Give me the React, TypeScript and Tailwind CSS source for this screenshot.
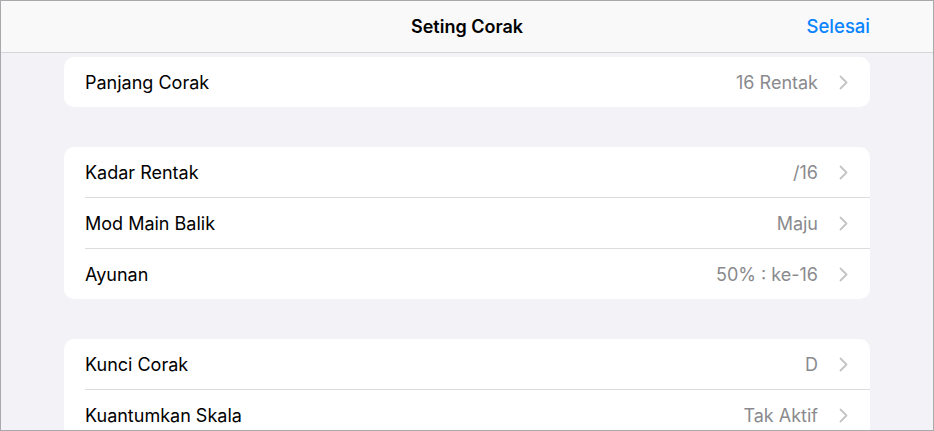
type Row = { label: string; value: string }

const groups: Row[][] = [
  [{ label: 'Panjang Corak', value: '16 Rentak' }],
  [
    { label: 'Kadar Rentak', value: '/16' },
    { label: 'Mod Main Balik', value: 'Maju' },
    { label: 'Ayunan', value: '50% : ke-16' },
  ],
  [
    { label: 'Kunci Corak', value: 'D' },
    { label: 'Kuantumkan Skala', value: 'Tak Aktif' },
  ],
]

function Chevron() {
  return (
    <svg viewBox="0 0 9 15" className="ml-[21px] h-[15px] w-[9px]" fill="none">
      <path d="M1.5 1.5 L7.5 7.5 L1.5 13.5" stroke="#c4c4c7" strokeWidth="1.8" strokeLinecap="round" strokeLinejoin="round" />
    </svg>
  )
}

function SettingsGroup({ rows }: { rows: Row[] }) {
  return (
    <div className="overflow-hidden rounded-[10px] bg-white">
      {rows.map((row, i) => (
        <div key={row.label} className="flex">
          <div
            className={
              i > 0
                ? 'ml-[21px] flex h-[51px] flex-1 items-center border-t border-[#dcdce0] pr-[22px] pt-px'
                : 'ml-[21px] flex h-[50px] flex-1 items-center pr-[22px]'
            }
          >
            <span className="flex-1 text-[18px] text-black">{row.label}</span>
            <span className="text-[18px] text-[#8a8a8e]">{row.value}</span>
            <Chevron />
          </div>
        </div>
      ))}
    </div>
  )
}

export default function App() {
  return (
    <div
      className="h-[431px] w-[934px] overflow-hidden border border-[#a9a9ad] bg-[#f2f2f7]"
      style={{ fontFamily: 'Inter, "Noto Sans", sans-serif' }}
    >
      <header className="flex h-[52px] items-center border-b border-[#d6d6da] bg-[#f9f9f9] px-[63px]">
        <div className="flex-1" />
        <h1 className="text-[18px] font-semibold text-black">Seting Corak</h1>
        <div className="flex flex-1 justify-end">
          <button type="button" className="text-[18.5px] font-medium text-[#0a84ff]">
            Selesai
          </button>
        </div>
      </header>
      <main className="flex flex-col gap-[40px] px-[63px] pt-[4px]">
        {groups.map((rows, i) => (
          <SettingsGroup key={i} rows={rows} />
        ))}
      </main>
    </div>
  )
}
